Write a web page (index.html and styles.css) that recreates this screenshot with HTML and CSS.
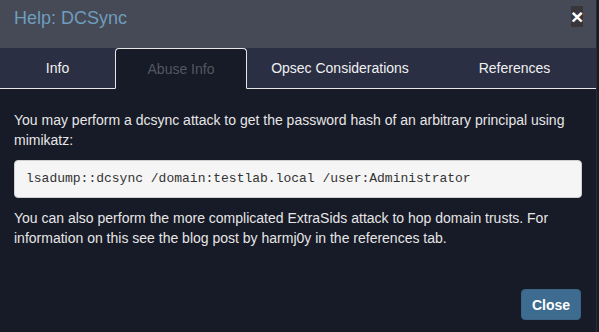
FILE: index.html
```html
<!DOCTYPE html>
<html lang="en">
<head>
  <meta charset="UTF-8" />
  <title>Help: DCSync</title>
  <link rel="stylesheet" href="styles.css">
</head>
<body>
  <div class="modal">
    <div class="modal-header">
      <h4 class="modal-title">Help: DCSync</h4>
      <span class="close-btn">&times;</span>
    </div>
    <ul class="nav-tabs">
      <li class="tab tab-info">Info</li>
      <li class="tab tab-abuse active">Abuse Info</li>
      <li class="tab tab-opsec">Opsec Considerations</li>
      <li class="tab tab-refs">References</li>
    </ul>
    <div class="modal-body">
      <p>You may perform a dcsync attack to get the password hash of an arbitrary principal using mimikatz:</p>
      <pre class="code">lsadump::dcsync /domain:testlab.local /user:Administrator</pre>
      <p>You can also perform the more complicated ExtraSids attack to hop domain trusts. For information on this see the blog post by harmj0y in the references tab.</p>
    </div>
    <div class="modal-footer">
      <button class="btn-close">Close</button>
    </div>
  </div>
</body>
</html>
```

FILE: styles.css
```css
html, body {
  margin: 0;
  padding: 0;
  height: 100%;
}

body {
  background: #171a27;
  font-family: 'Liberation Sans', Arial, sans-serif;
  overflow: hidden;
}

.modal {
  width: 596px;
  height: 332px;
  background: #171a27;
  border-right: 1px solid #2a2d38;
  display: flex;
  flex-direction: column;
}

.modal-header {
  height: 48px;
  background: #464a56;
  display: flex;
  align-items: flex-start;
  justify-content: space-between;
  padding: 0 14px;
  box-sizing: border-box;
}

.modal-title {
  margin: 0;
  padding-top: 8px;
  font-size: 18px;
  font-weight: normal;
  color: #6e9dbd;
}

.close-btn {
  margin-top: 6px;
  margin-right: -1px;
  width: 12px;
  height: 21px;
  background: #38363a;
  color: #fff;
  font-size: 21px;
  font-weight: bold;
  line-height: 21px;
  text-align: center;
}

.nav-tabs {
  list-style: none;
  margin: 0;
  padding: 0;
  display: flex;
  height: 41px;
  background: #2b2f43;
  border-bottom: 1px solid #e6e6e6;
  box-sizing: border-box;
}

.tab {
  display: flex;
  align-items: center;
  justify-content: center;
  font-size: 14px;
  color: #f0f0f0;
  box-sizing: border-box;
}

.tab-info { width: 115px; }
.tab-abuse { width: 132px; }
.tab-opsec { width: 186px; }
.tab-refs { width: 163px; }

.tab.active {
  background: #171a27;
  color: #535762;
  border: 1px solid #e6e6e6;
  border-bottom-color: #171a27;
  border-radius: 4px 4px 0 0;
  height: 41px;
}

.modal-body {
  flex: 1;
  padding: 21px 14px 0;
  color: #e6e6e6;
  font-size: 14px;
  line-height: 20px;
}

.modal-body p {
  margin: 0 0 10px;
}

.code {
  margin: 0 0 10px;
  padding: 9px 11px;
  background: #f5f5f5;
  border: 1px solid #cfcfcf;
  border-radius: 4px;
  color: #333;
  font-family: 'Liberation Mono', 'Courier New', monospace;
  font-size: 13px;
  line-height: 18px;
}

.modal-footer {
  display: flex;
  justify-content: flex-end;
  padding: 0 15px 12px;
}

.btn-close {
  width: 60px;
  height: 31px;
  background: #3e6b90;
  border: 1px solid #3a6386;
  border-radius: 4px;
  color: #fff;
  font-family: 'Liberation Sans', Arial, sans-serif;
  font-size: 14px;
  font-weight: bold;
}
```
